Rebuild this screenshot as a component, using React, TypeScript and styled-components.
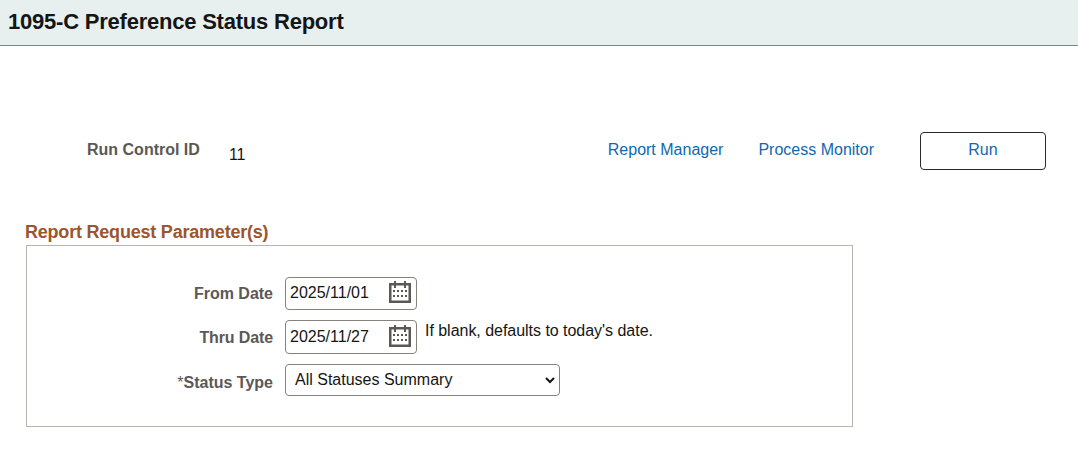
import React, { useState } from "react";
import styled, { createGlobalStyle } from "styled-components";

const GlobalStyle = createGlobalStyle`
  *, *::before, *::after { box-sizing: border-box; }
  body {
    margin: 0;
    background: #fff;
    color: #151515;
    font: 16px/20px "Liberation Sans", Arial, sans-serif;
  }
`;

const Page = styled.main`
  height: 460px;
  overflow: hidden;
`;

const Header = styled.header`
  height: 46px;
  padding: 9px 8px 0;
  background: #e7f0ef;
  border-bottom: 1px solid #7f8484;
`;

const Title = styled.h1`
  margin: 0;
  font-size: 22px;
  line-height: 25px;
  font-weight: bold;
  letter-spacing: -0.22px;
  color: #151515;
  white-space: nowrap;
`;

const RunBar = styled.section`
  display: flex;
  align-items: flex-start;
  height: 38px;
  margin: 86px 32px 0 87px;
`;

const Label = styled.label`
  font-weight: bold;
  color: #5b5856;
  white-space: nowrap;
`;

const RunLabel = styled(Label)`
  width: 142px;
  padding-top: 8px;
`;

const RunValue = styled.span`
  padding-top: 13px;
  letter-spacing: -0.3px;
`;

const Links = styled.nav`
  display: flex;
  gap: 35px;
  margin: 8px 46px 0 auto;
`;

const Link = styled.a`
  color: #0f69ae;
  text-decoration: none;
  white-space: nowrap;
`;

const RunButton = styled.button`
  width: 126px;
  height: 38px;
  padding: 0 0 3px;
  border: 1px solid #2b2a29;
  border-radius: 4px;
  background: #fff;
  color: #0f69ae;
  font: inherit;
`;

const SectionTitle = styled.h2`
  margin: 52px 0 0 25px;
  font-size: 18px;
  line-height: 20px;
  height: 23px;
  letter-spacing: -0.21px;
  color: #9c552c;
  white-space: nowrap;
`;

const Parameters = styled.section`
  width: 827px;
  height: 182px;
  margin-left: 26px;
  padding-top: 31px;
  border: 1px solid #b8b4b0;
`;

const Field = styled.div<{ $height: number }>`
  display: flex;
  align-items: flex-start;
  height: ${({ $height }) => $height}px;
`;

const FieldLabel = styled(Label)<{ $top: number; $spacing?: number }>`
  width: 246px;
  margin-right: 12px;
  padding-top: ${({ $top }) => $top}px;
  letter-spacing: ${({ $spacing = 0 }) => $spacing}px;
  text-align: right;
`;

const Required = styled.span`
  font-weight: normal;
`;

const DateBox = styled.div<{ $height: number }>`
  display: flex;
  justify-content: space-between;
  width: 132px;
  height: ${({ $height }) => $height}px;
  padding: ${({ $height }) => $height - 30}px 5px 0 4px;
  border: 1px solid #86827e;
  border-radius: 4px;
`;

const DateInput = styled.input`
  width: 90px;
  height: 24px;
  padding: 0;
  border: 0;
  outline: 0;
  background: transparent;
  color: #151515;
  font: inherit;
`;

const Hint = styled.span`
  padding-top: 1px;
  margin-left: 8px;
  letter-spacing: -0.03px;
  white-space: nowrap;
`;

const SelectFrame = styled.div`
  display: flex;
  width: 275px;
  height: 32px;
  padding-right: 1px;
  border: 1px solid #86827e;
  border-radius: 4px;
  background: #fff;
`;

const Select = styled.select`
  flex: 1;
  padding: 0 0 1px 5px;
  border: 0;
  outline: 0;
  background: transparent;
  color: #151515;
  font: inherit;
`;

const Calendar = styled.svg`
  flex: none;
  width: 22px;
  height: 23px;
`;

function CalendarIcon() {
  return (
    <Calendar viewBox="0 0 22 23" fill="#5b5856">
      <path fillRule="evenodd" d="M0 2h22v20H0zM2.5 4.5v15h17v-15z" />
      <path d="M5 0h2v7H5zM15 0h2v7h-2z" />
      {[9, 14].map((y) =>
        [4, 8, 12, 16].map((x) => (
          <rect key={`${x}-${y}`} x={x} y={y} width="2" height="2" />
        )),
      )}
    </Calendar>
  );
}

function DateField({ id, initial, height }: { id: string; initial: string; height: number }) {
  const [value, setValue] = useState(initial);
  return (
    <DateBox $height={height}>
      <DateInput id={id} value={value} onChange={(e) => setValue(e.target.value)} />
      <CalendarIcon />
    </DateBox>
  );
}

export default function App() {
  return (
    <Page>
      <GlobalStyle />
      <Header>
        <Title>1095-C Preference Status Report</Title>
      </Header>
      <RunBar>
        <RunLabel as="span">Run Control ID</RunLabel>
        <RunValue>11</RunValue>
        <Links>
          <Link href="#reports">Report Manager</Link>
          <Link href="#processes">Process Monitor</Link>
        </Links>
        <RunButton type="button">Run</RunButton>
      </RunBar>
      <SectionTitle>Report Request Parameter(s)</SectionTitle>
      <Parameters>
        <Field $height={43}>
          <FieldLabel htmlFor="from" $top={7}>From Date</FieldLabel>
          <DateField id="from" initial="2025/11/01" height={33} />
        </Field>
        <Field $height={44}>
          <FieldLabel htmlFor="thru" $top={8} $spacing={-0.12}>Thru Date</FieldLabel>
          <DateField id="thru" initial="2025/11/27" height={34} />
          <Hint>If blank, defaults to today's date.</Hint>
        </Field>
        <Field $height={32}>
          <FieldLabel htmlFor="status" $top={9}>
            <Required>*</Required>Status Type
          </FieldLabel>
          <SelectFrame>
            <Select id="status" defaultValue="summary">
              <option value="summary">All Statuses Summary</option>
            </Select>
          </SelectFrame>
        </Field>
      </Parameters>
    </Page>
  );
}
